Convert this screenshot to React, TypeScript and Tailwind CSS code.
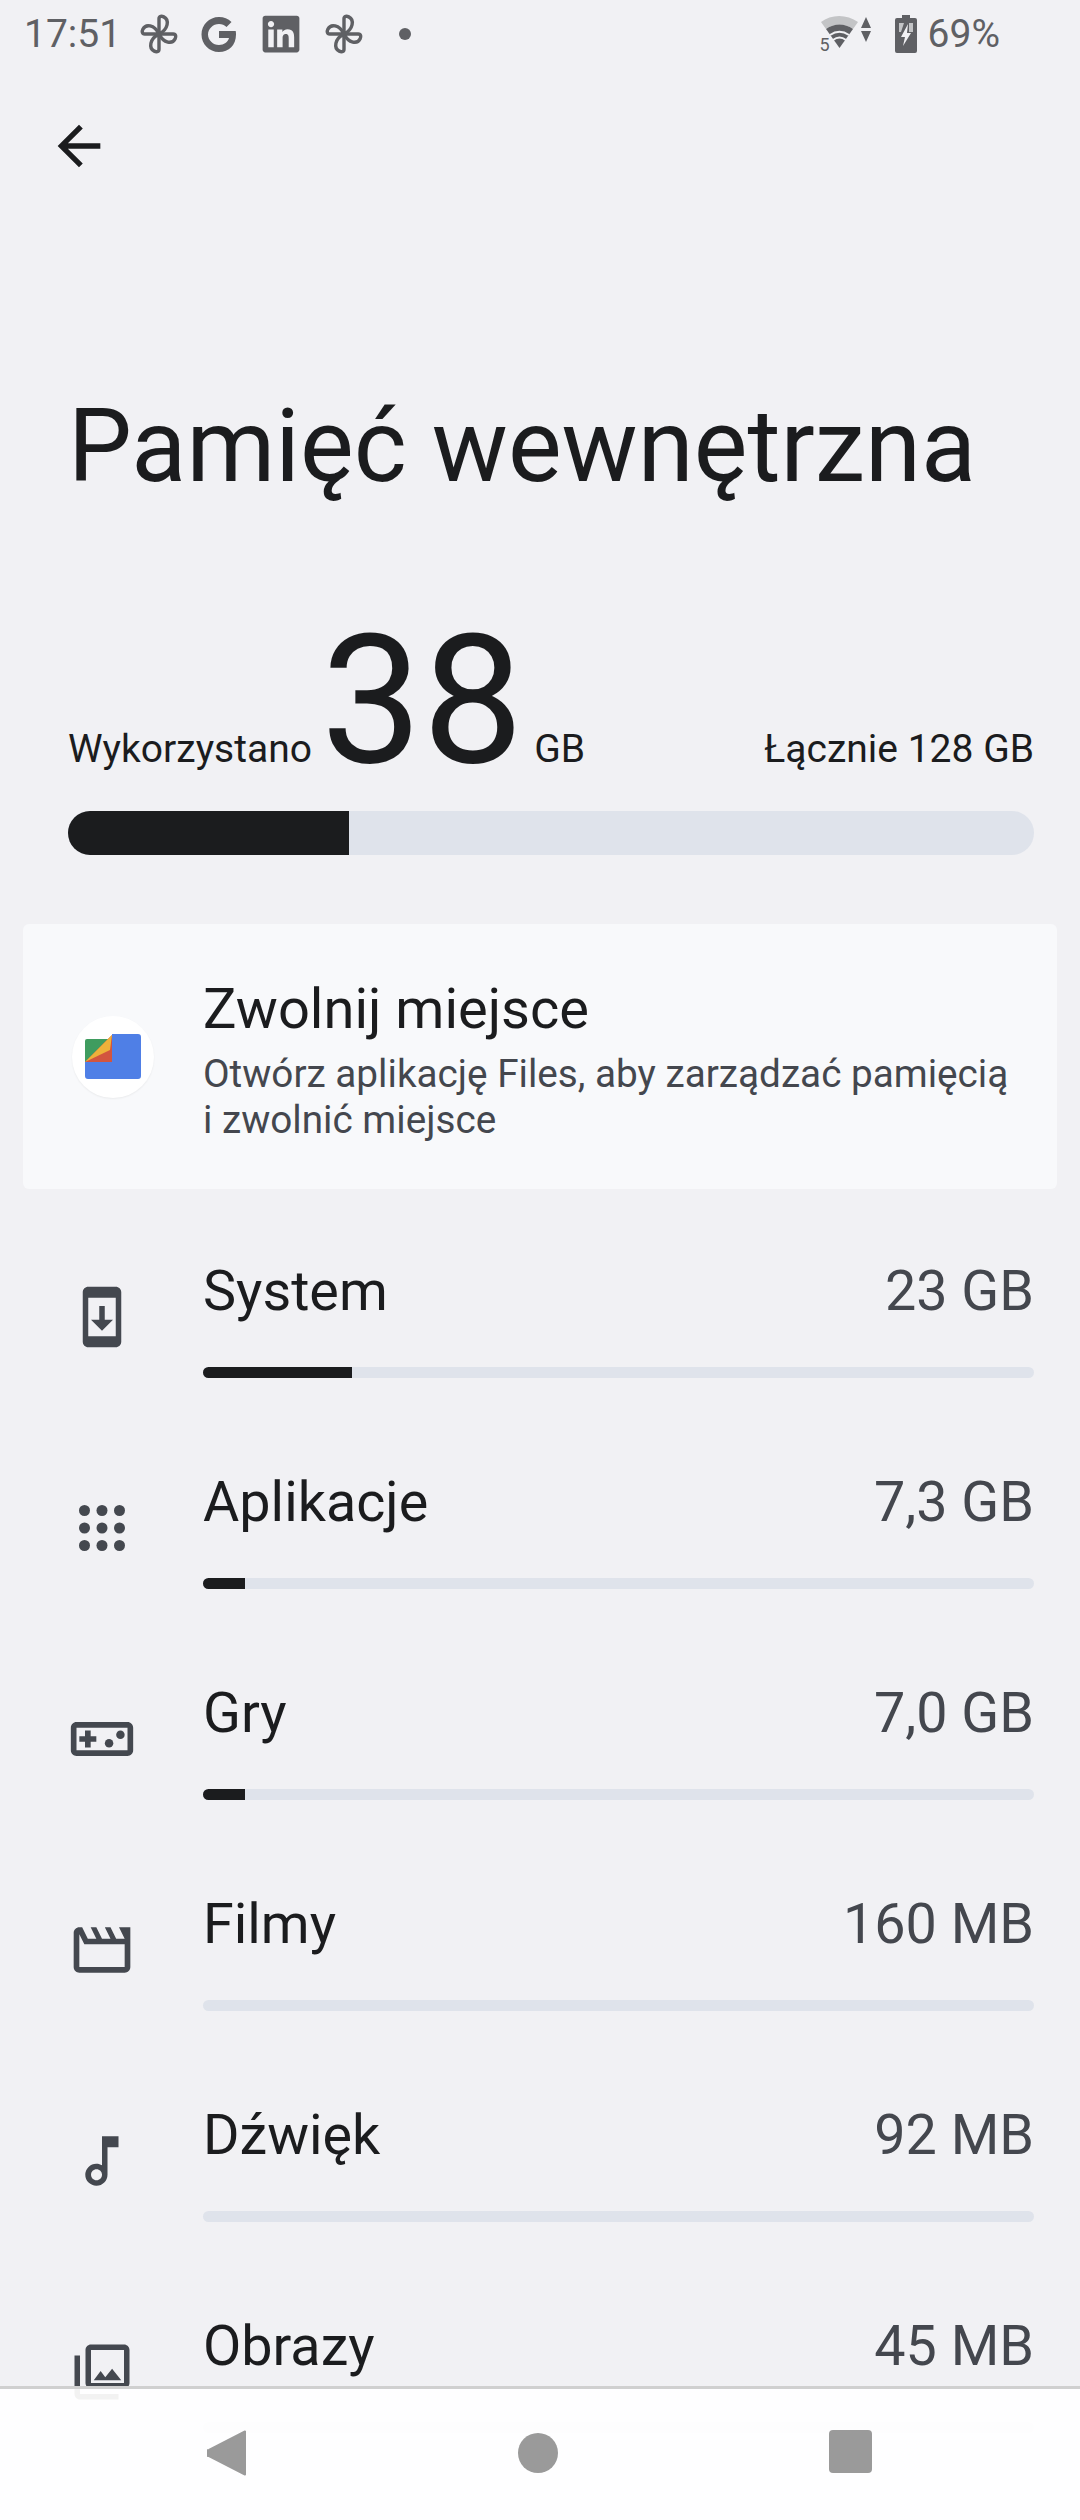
import { MdArrowBack, MdOutlineMovie, MdOutlineMusicNote, MdOutlinePhotoLibrary, MdOutlineSystemUpdate, MdOutlineVideogameAsset } from "react-icons/md";
import { FaLinkedin } from "react-icons/fa";

const Pinwheel = () => (
  <svg width="38" height="40" viewBox="0 0 40 42" fill="none" stroke="#5f6064" strokeWidth="3.6" strokeLinejoin="round">
    <path d="M20 21V5C20 2 23 2 25 3C31 6 30 16 20 21Z" />
    <path d="M20 21H35C38 21 38 24 37 26C34 32 25 31 20 21Z" />
    <path d="M20 21V37C20 40 17 40 15 39C9 36 10 26 20 21Z" />
    <path d="M20 21H5C2 21 2 18 3 16C6 10 15 11 20 21Z" />
  </svg>
);

const Google = () => (
  <svg width="36" height="37" viewBox="0 0 36 37">
    <path d="M18 15V22H28C27 26 23 29 18 29C12 29 7 24 7 18.500C7 13 12 8 18 8C21 8 23.500 9 25.500 11L30.500 6C27 2.800 23 1 18 1C8 1 0.500 9 0.500 18.500C0.500 28 8 36 18 36C28 36 35 29 35 18.500C35 17.200 35 16 34.700 15Z" fill="#5f6064" />
  </svg>
);

const AppsDots = () => (
  <svg width="46" height="46" viewBox="0 0 46 46" fill="#44484f">
    {[5.500, 23, 40.500].map((y) =>
      [5.500, 23, 40.500].map((x) => <circle key={`${x}-${y}`} cx={x} cy={y} r="5.500" />)
    )}
  </svg>
);

const FilesLogo = () => (
  <svg width="56" height="46" viewBox="0 0 56 46">
    <path d="M2 5H28V29H0V7A2 2 0 0 1 2 5Z" fill="#3f9c5f" />
    <path d="M0 28L27 1V28Z" fill="#d2553f" />
    <path d="M0 28L27 1L25 16Z" fill="#eeb13a" />
    <path d="M27 0H53A3 3 0 0 1 56 3V42A3 3 0 0 1 53 45H3A3 3 0 0 1 0 42V28H27Z" fill="#4f7fe6" />
  </svg>
);

type Row = {
  name: string;
  size: string;
  fill: number;
  icon: React.ReactNode;
};

const rows: Row[] = [
  { name: "System", size: "23 GB", fill: 149, icon: <MdOutlineSystemUpdate size={66} /> },
  { name: "Aplikacje", size: "7,3 GB", fill: 42, icon: <AppsDots /> },
  { name: "Gry", size: "7,0 GB", fill: 42, icon: <MdOutlineVideogameAsset size={68} /> },
  { name: "Filmy", size: "160 MB", fill: 0, icon: <MdOutlineMovie size={68} /> },
  { name: "Dźwięk", size: "92 MB", fill: 0, icon: <MdOutlineMusicNote size={66} /> },
  { name: "Obrazy", size: "45 MB", fill: 0, icon: <MdOutlinePhotoLibrary size={66} /> },
];

export default function App() {
  return (
    <div className="relative h-[2520px] w-[1080px] overflow-hidden bg-[#f1f1f4] font-['Roboto',sans-serif] text-[#1b1c1e]">
      {/* Status bar */}
      <div className="flex h-[68px] items-center justify-between pl-[24px] pr-[80px] text-[#5f6064]">
        <div className="flex items-center">
          <span className="text-[39px] leading-none">17:51</span>
          <div className="ml-[19px] flex items-center gap-[23px]">
            <Pinwheel />
            <Google />
            <FaLinkedin size={42} color="#5f6064" />
            <Pinwheel />
          </div>
          <div className="ml-[36px] h-[12px] w-[12px] rounded-full bg-[#5f6064]" />
        </div>
        <div className="flex items-center">
          <div className="relative h-[38px] w-[52px]">
            <svg width="52" height="38" viewBox="0 0 52 38">
              <path d="M1 7C11 -1 27 -1 38 7L33 14C25 8 14 8 6 14Z" fill="#c3c4c6" />
              <path d="M6 14C14 8 25 8 33 14L19.500 33Z" fill="#5f6064" />
              <path d="M10 20C16 16 23 16 29 20" stroke="#f1f1f4" strokeWidth="2" fill="none" />
              <path d="M13 25C17 22 22 22 26 25" stroke="#f1f1f4" strokeWidth="2" fill="none" />
              <path d="M46 2L51 13H41Z M46 27L51 16H41Z" fill="#5f6064" />
            </svg>
            <span className="absolute bottom-[-2px] left-0 text-[18px] leading-[20px]">5</span>
          </div>
          <svg className="ml-[23px]" width="22" height="38" viewBox="0 0 22 38">
            <path d="M7 0H15V3H20A2 2 0 0 1 22 5V36A2 2 0 0 1 20 38H2A2 2 0 0 1 0 36V5A2 2 0 0 1 2 3H7Z" fill="#5f6064" />
            <path d="M4 8H9L6 17H4Z M14 8H18V17H14Z" fill="#c3c4c6" />
            <path d="M13 9L6 22H10L8 31L16 18H12Z" fill="#f1f1f4" />
          </svg>
          <span className="ml-[11px] text-[39px] leading-none">69%</span>
        </div>
      </div>

      {/* Toolbar */}
      <div className="flex h-[156px] items-center pl-[47px]">
        <MdArrowBack size={64} color="#1b1c1e" />
      </div>

      {/* Title */}
      <h1 className="mt-[195px] pl-[68px] text-[101.3px] leading-[56px] font-normal">Pamięć wewnętrzna</h1>

      {/* Usage */}
      <div className="mt-[136px] flex items-baseline justify-between pl-[68px] pr-[46px] leading-none">
        <div className="flex items-baseline">
          <span className="text-[39px]">Wykorzystano</span>
          <span className="ml-[9px] text-[180px]">38</span>
          <span className="ml-[11px] text-[39px]">GB</span>
        </div>
        <span className="text-[39px]">Łącznie 128 GB</span>
      </div>
      <div className="mx-[46px] ml-[68px] mt-[20px] h-[44px] overflow-hidden rounded-[22px] bg-[#dfe3eb]">
        <div className="h-full w-[281px] bg-[#1b1c1e]" />
      </div>

      {/* Free up card */}
      <div className="ml-[23px] mt-[69px] flex h-[265px] w-[1034px] items-center rounded-[6px] bg-[#f8f9fb]">
        <div className="ml-[49px] flex h-[82px] w-[82px] items-center justify-center rounded-full bg-white shadow-[0_1px_2px_rgba(0,0,0,0.06)]">
          <FilesLogo />
        </div>
        <div className="ml-[49px] mt-[53px] self-start">
          <div className="text-[56px] leading-[64px]">Zwolnij miejsce</div>
          <div className="mt-[10px] text-[38.7px] leading-[46px] text-[#44474e]">
            Otwórz aplikację Files, aby zarządzać pamięcią
            <br />i zwolnić miejsce
          </div>
        </div>
      </div>

      {/* Storage rows */}
      <div className="mt-[67px]">
        {rows.map((row) => (
          <div key={row.name} className="flex h-[211px]">
            <div className="flex h-[105px] w-[203px] items-end justify-center text-[#44484f]">
              <div className="flex h-[88px] items-center">{row.icon}</div>
            </div>
            <div className="flex-1 pr-[46px]">
              <div className="flex items-center justify-between text-[55.7px] leading-[70px]">
                <span>{row.name}</span>
                <span className="text-[#44474e]">{row.size}</span>
              </div>
              <div className="mt-[41px] h-[11px] overflow-hidden rounded-full bg-[#dfe3eb]">
                {row.fill > 0 && <div className="h-full bg-[#1b1c1e]" style={{ width: row.fill }} />}
              </div>
            </div>
          </div>
        ))}
      </div>

      {/* Navigation bar */}
      <div className="absolute inset-x-0 bottom-0 flex h-[134px] items-start border-t-[3px] border-[#d0d0d0] bg-white/[0.93] pt-[41px]">
        <div className="flex w-full justify-between pl-[207px] pr-[208px]">
          <svg width="40" height="46" viewBox="0 0 40 46">
            <path d="M38 1.500V44.500L2 26A3 3 0 0 1 2 20Z" fill="#9a9a9a" stroke="#9a9a9a" strokeWidth="2" strokeLinejoin="round" />
          </svg>
          <div className="h-[40px] w-[40px] self-center rounded-full bg-[#9a9a9a]" />
          <div className="h-[43px] w-[43px] rounded-[4px] bg-[#9a9a9a]" />
        </div>
      </div>
    </div>
  );
}
